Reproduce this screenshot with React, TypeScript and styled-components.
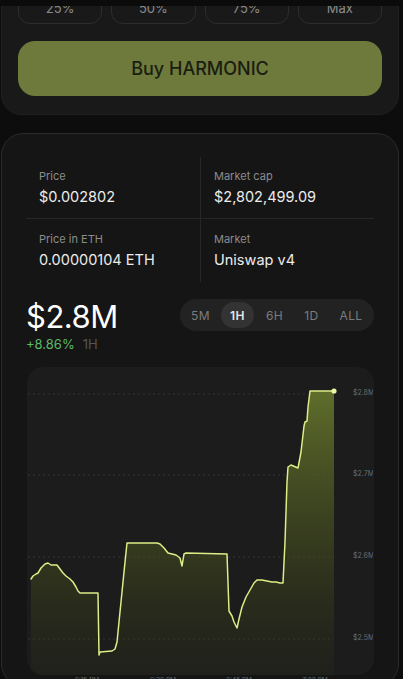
import React from "react";
import styled, { createGlobalStyle } from "styled-components";

const GlobalStyle = createGlobalStyle`
  html, body { margin: 0; padding: 0; background: #0d0d0d; overflow: hidden; }
  body { font-family: Inter, "Noto Sans", "Liberation Sans", sans-serif; color: #e8e8e8; -webkit-font-smoothing: antialiased; }
  * { box-sizing: border-box; }
`;

const Page = styled.div`
  display: flex;
  flex-direction: column;
  gap: 18px;
  padding: 0 4px 0 1px;
  width: 403px;
  height: 679px;
  overflow: hidden;
`;

const TopShade = styled.div`
  position: fixed;
  top: 0;
  left: 0;
  right: 0;
  height: 6px;
  background: #0b0b0b;
  z-index: 5;
`;

const TradeCard = styled.section`
  margin-top: -27px;
  background: #19191a;
  border: 1px solid #1f1f20;
  border-radius: 20px;
  padding: 18px 16px 18px;
  display: flex;
  flex-direction: column;
  gap: 17px;
`;

const PresetRow = styled.div`
  display: grid;
  grid-template-columns: repeat(4, 1fr);
  gap: 9px;
`;

const PresetButton = styled.button`
  height: 32px;
  border: 1px solid #2d2d2e;
  border-radius: 12px;
  background: transparent;
  color: #8a8a8a;
  font-family: inherit;
  font-size: 13px;
  padding: 0;
`;

const BuyButton = styled.button`
  height: 55px;
  border: none;
  border-radius: 17px;
  background: #6d7a3c;
  color: #1a1d10;
  font-family: inherit;
  font-size: 18px;
  font-weight: 500;
  padding: 0;
`;

const InfoCard = styled.section`
  background: #151515;
  border: 1px solid #2a2a2a;
  border-radius: 22px;
  padding: 23px 24px 0;
  display: flex;
  flex-direction: column;
  flex: 1;
`;

const StatsGrid = styled.div`
  display: grid;
  grid-template-columns: 174px 1fr;
`;

const StatCell = styled.div<{ $right?: boolean; $bottom?: boolean }>`
  padding: ${(p) => (p.$bottom ? "12px 13px 11px" : "11px 13px 10px")};
  border-left: ${(p) => (p.$right ? "1px solid #262626" : "none")};
  border-top: ${(p) => (p.$bottom ? "1px solid #262626" : "none")};
  display: flex;
  flex-direction: column;
`;

const StatLabel = styled.span`
  font-size: 11px;
  line-height: 16px;
  color: #8c8c8c;
`;

const StatValue = styled.span`
  margin-top: 2px;
  font-size: 14.5px;
  line-height: 22px;
  color: #ececec;
`;

const HeaderRow = styled.div`
  margin-top: 17px;
  display: flex;
  justify-content: space-between;
  align-items: flex-start;
`;

const CapBlock = styled.div`
  display: flex;
  flex-direction: column;
`;

const CapValue = styled.span`
  font-size: 31px;
  line-height: 36px;
  color: #ffffff;
  letter-spacing: -0.5px;
`;

const ChangeLine = styled.div`
  display: flex;
  gap: 8px;
  font-size: 13px;
  line-height: 16px;
  margin-top: 1px;
`;

const ChangeUp = styled.span`
  color: #5cb96a;
`;

const ChangeRange = styled.span`
  color: #555555;
`;

const TabPill = styled.div`
  display: flex;
  gap: 4px;
  padding: 3px 4px;
  height: 32px;
  border-radius: 16px;
  background: #222222;
`;

const Tab = styled.span<{ $active?: boolean; $wide?: boolean }>`
  width: ${(p) => (p.$wide ? "38px" : "33px")};
  height: 26px;
  border-radius: 13px;
  display: flex;
  align-items: center;
  justify-content: center;
  font-size: 12px;
  letter-spacing: 0.4px;
  font-weight: ${(p) => (p.$active ? 600 : 400)};
  color: ${(p) => (p.$active ? "#e6e6e6" : "#7c7c7c")};
  background: ${(p) => (p.$active ? "#333333" : "transparent")};
`;

const ChartBox = styled.div`
  margin-top: 15px;
  margin-left: 1px;
  height: 308px;
  border-radius: 16px;
  background: #1c1c1c;
  overflow: hidden;
  flex-shrink: 0;
`;

const ChartSvg = styled.svg`
  display: block;
`;

const AxisRow = styled.div`
  display: flex;
  gap: 36px;
  padding: 1px 0 0 40px;
  margin-left: 1px;
  font-size: 6.5px;
  line-height: 9px;
  color: #6a6a6a;
`;

const AxisTick = styled.span`
  width: 40px;
  text-align: center;
`;

const points: [number, number][] = [
  [4, 212], [6, 209], [9, 207], [11, 206], [14, 201], [18, 197], [21, 196], [24, 198],
  [30, 198], [33, 202], [36, 206], [39, 209], [43, 212], [46, 215], [49, 220], [51, 224],
  [53, 226], [71, 226], [72, 288], [73, 285], [85, 284], [88, 282], [90, 275], [93, 245],
  [97, 205], [100, 176], [130, 176], [133, 177], [137, 181], [141, 186], [145, 187],
  [149, 188], [153, 191], [155, 199], [157, 187], [159, 186], [200, 187], [202, 244],
  [205, 249], [207, 255], [210, 261], [212, 252], [215, 240], [219, 230], [223, 223],
  [227, 216], [230, 213], [235, 213], [240, 214], [245, 215], [249, 215], [253, 216],
  [256, 216], [258, 175], [260, 115], [261, 100], [264, 98], [271, 101], [274, 85],
  [277, 59], [278, 55], [280, 54], [281, 40], [283, 24], [307, 24],
];

const linePath = points.map(([x, y], i) => `${i === 0 ? "M" : "L"}${x} ${y}`).join(" ");
const areaPath = `${linePath} L307 308 L4 308 Z`;

const grid = [
  { y: 27, label: "$2.8M" },
  { y: 108, label: "$2.7M" },
  { y: 190, label: "$2.6M" },
  { y: 272, label: "$2.5M" },
];

const stats = [
  { label: "Price", value: "$0.002802" },
  { label: "Market cap", value: "$2,802,499.09" },
  { label: "Price in ETH", value: "0.00000104 ETH" },
  { label: "Market", value: "Uniswap v4" },
];

const tabs = ["5M", "1H", "6H", "1D", "ALL"];

export default function App() {
  return (
    <>
      <GlobalStyle />
      <TopShade />
      <Page>
        <TradeCard>
          <PresetRow>
            {["25%", "50%", "75%", "Max"].map((t) => (
              <PresetButton key={t}>{t}</PresetButton>
            ))}
          </PresetRow>
          <BuyButton>Buy HARMONIC</BuyButton>
        </TradeCard>

        <InfoCard>
          <StatsGrid>
            {stats.map((s, i) => (
              <StatCell key={s.label} $right={i % 2 === 1} $bottom={i >= 2}>
                <StatLabel>{s.label}</StatLabel>
                <StatValue>{s.value}</StatValue>
              </StatCell>
            ))}
          </StatsGrid>

          <HeaderRow>
            <CapBlock>
              <CapValue>$2.8M</CapValue>
              <ChangeLine>
                <ChangeUp>+8.86%</ChangeUp>
                <ChangeRange>1H</ChangeRange>
              </ChangeLine>
            </CapBlock>
            <TabPill>
              {tabs.map((t) => (
                <Tab key={t} $active={t === "1H"} $wide={t === "ALL"}>
                  {t}
                </Tab>
              ))}
            </TabPill>
          </HeaderRow>

          <ChartBox>
            <ChartSvg width="346" height="308" viewBox="0 0 346 308">
              <defs>
                <linearGradient id="areaFill" x1="0" y1="0" x2="0" y2="1">
                  <stop offset="0%" stopColor="#6b7c2e" stopOpacity="0.85" />
                  <stop offset="55%" stopColor="#48521f" stopOpacity="0.55" />
                  <stop offset="100%" stopColor="#2a2e18" stopOpacity="0.25" />
                </linearGradient>
              </defs>
              {grid.map((g) => (
                <line key={g.label} x1="1" x2="307" y1={g.y} y2={g.y} stroke="#343434" strokeWidth="1" strokeDasharray="2 3" />
              ))}
              <path d={areaPath} fill="url(#areaFill)" />
              <path d={linePath} fill="none" stroke="#dcee86" strokeWidth="1.5" strokeLinejoin="round" strokeLinecap="round" />
              <circle cx="307" cy="24" r="2.6" fill="#eef5a6" />
              {grid.map((g) => (
                <text key={g.label + "t"} x="326" y={g.y + 1} fontSize="7" fill="#6e6e6e" fontFamily="Inter, sans-serif">
                  {g.label}
                </text>
              ))}
            </ChartSvg>
          </ChartBox>
          <AxisRow>
            <AxisTick>6:15 PM</AxisTick>
            <AxisTick>6:30 PM</AxisTick>
            <AxisTick>6:45 PM</AxisTick>
            <AxisTick>7:00 PM</AxisTick>
          </AxisRow>
        </InfoCard>
      </Page>
    </>
  );
}
